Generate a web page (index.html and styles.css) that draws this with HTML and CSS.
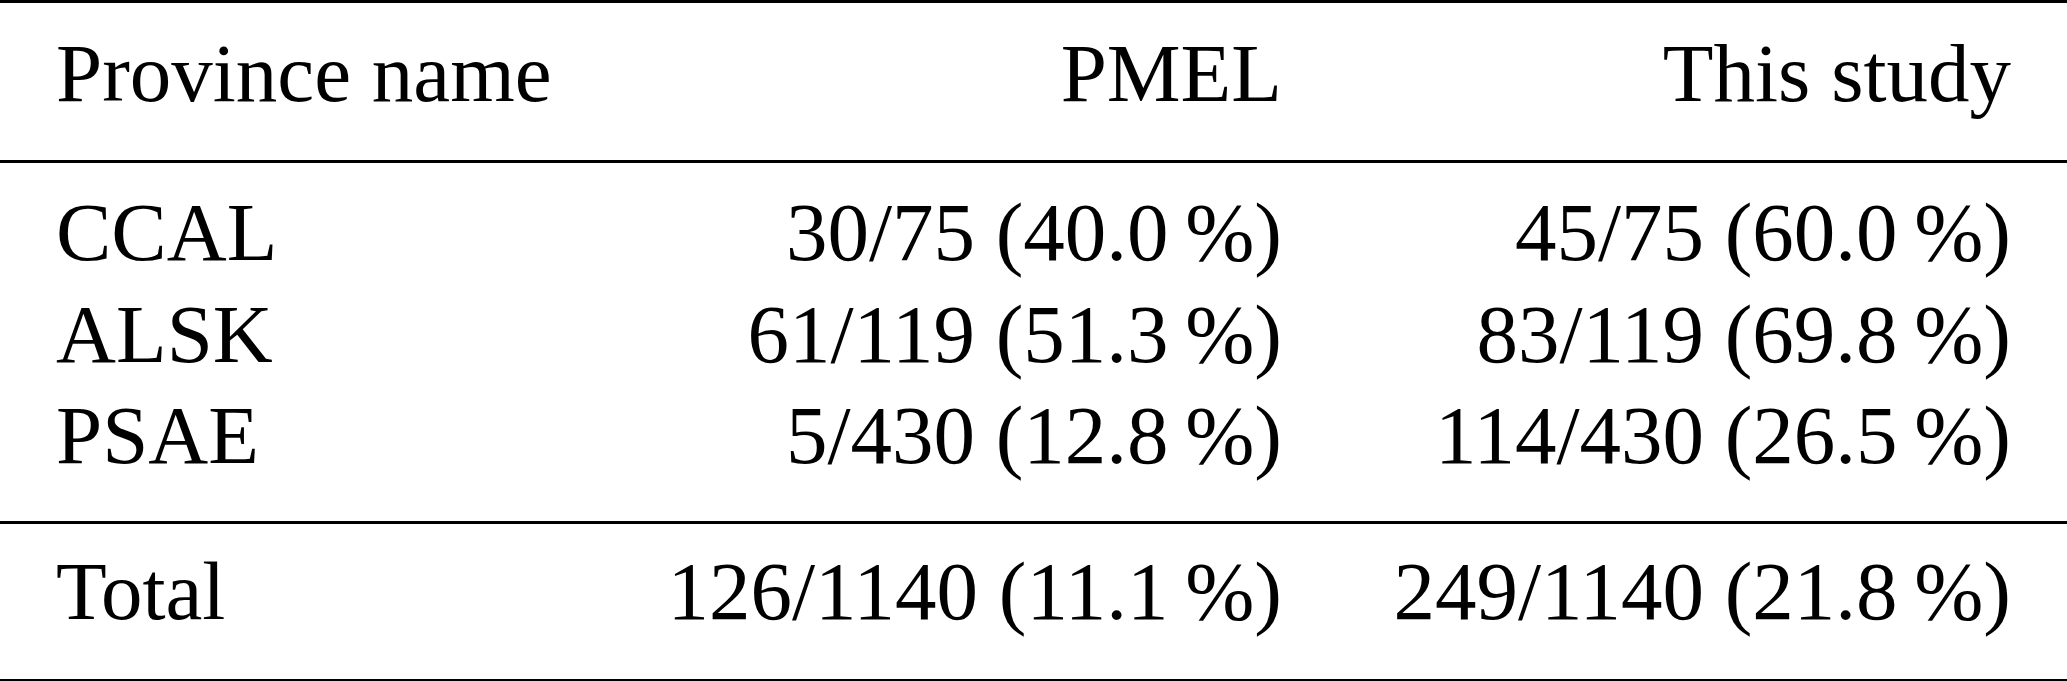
FILE: index.html
```html
<!DOCTYPE html>
<html lang="en">
<head>
<meta charset="utf-8">
<title>Province comparison</title>
<link rel="stylesheet" href="styles.css">
</head>
<body>
<main class="table">
  <div class="rule rule-heavy"></div>
  <div class="group group-head">
    <div class="row">
      <span class="cell cell-left">Province name</span>
      <span class="cell cell-right">PMEL</span>
      <span class="cell cell-right">This study</span>
    </div>
  </div>
  <div class="rule rule-light"></div>
  <div class="group group-body">
    <div class="row">
      <span class="cell cell-left">CCAL</span>
      <span class="cell cell-right">30/75 (40.0&#8201;%)</span>
      <span class="cell cell-right">45/75 (60.0&#8201;%)</span>
    </div>
    <div class="row">
      <span class="cell cell-left">ALSK</span>
      <span class="cell cell-right">61/119 (51.3&#8201;%)</span>
      <span class="cell cell-right">83/119 (69.8&#8201;%)</span>
    </div>
    <div class="row">
      <span class="cell cell-left">PSAE</span>
      <span class="cell cell-right">5/430 (12.8&#8201;%)</span>
      <span class="cell cell-right">114/430 (26.5&#8201;%)</span>
    </div>
  </div>
  <div class="rule rule-light"></div>
  <div class="group group-foot">
    <div class="row">
      <span class="cell cell-left">Total</span>
      <span class="cell cell-right">126/1140 (11.1&#8201;%)</span>
      <span class="cell cell-right">249/1140 (21.8&#8201;%)</span>
    </div>
  </div>
  <div class="rule rule-heavy"></div>
</main>
</body>
</html>
```

FILE: styles.css
```css
html, body {
  margin: 0;
  padding: 0;
  background: #ffffff;
}

body {
  width: 2067px;
  height: 681px;
  overflow: hidden;
  font-family: "Liberation Serif", "Times New Roman", serif;
  font-size: 83px;
  line-height: 101.5px;
  color: #000000;
}

.table {
  display: flex;
  flex-direction: column;
  width: 100%;
}

.rule {
  background: #000000;
  width: 100%;
}

.rule-heavy {
  height: 3px;
}

.rule-light {
  height: 3px;
}

.group {
  display: flex;
  flex-direction: column;
  padding: 0 56px;
}

.group-head {
  padding-top: 20px;
  padding-bottom: 35.5px;
}

.group-body {
  padding-top: 19px;
  padding-bottom: 34.5px;
}

.group-foot {
  padding-top: 17px;
  padding-bottom: 36.5px;
}

.row {
  display: grid;
  grid-template-columns: minmax(0, 1fr) 700px 729px;
  height: 101.5px;
}

.cell {
  white-space: nowrap;
}

.cell-left {
  text-align: left;
}

.cell-right {
  text-align: right;
}
```
